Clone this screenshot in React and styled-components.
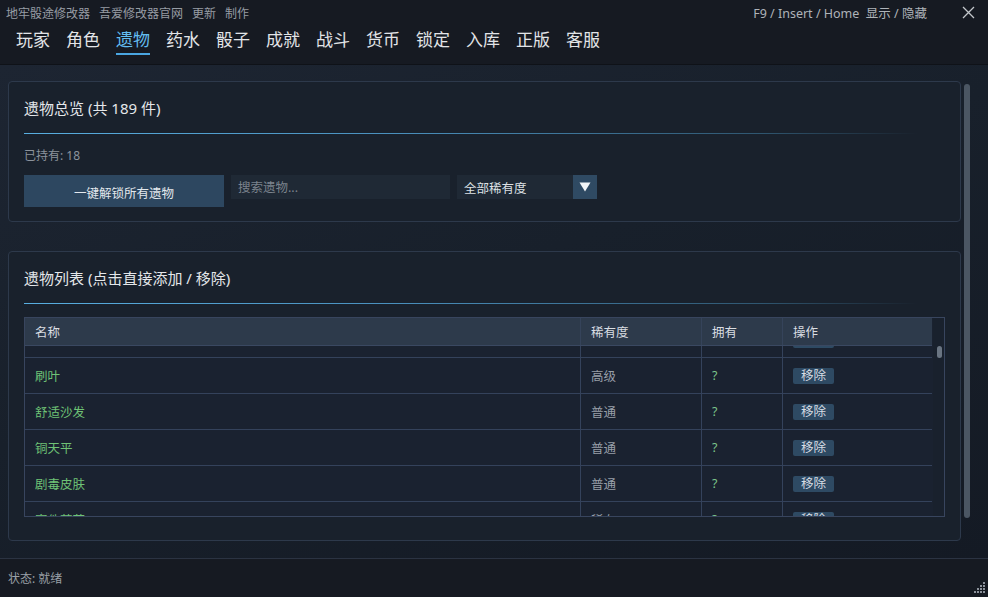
import React, { useLayoutEffect, useRef } from 'react';
import styled, { createGlobalStyle } from 'styled-components';

const GlobalStyle = createGlobalStyle`
  html, body {
    margin: 0;
    padding: 0;
    background: #161a22;
  }
  body {
    font-family: "Noto Sans", "Noto Sans CJK SC", sans-serif;
    color: #dfe3e8;
  }
  * { box-sizing: border-box; }
`;

const tabs = ['玩家', '角色', '遗物', '药水', '骰子', '成就', '战斗', '货币', '锁定', '入库', '正版', '客服'];

const relics = [
  { name: '灵感之石', rarity: '普通' },
  { name: '刷叶', rarity: '高级' },
  { name: '舒适沙发', rarity: '普通' },
  { name: '铜天平', rarity: '普通' },
  { name: '剧毒皮肤', rarity: '普通' },
  { name: '富件蒂花', rarity: '稀有' },
];

const App = () => {
  const bodyRef = useRef(null);

  // list opens slightly scrolled, like the game keeps it
  useLayoutEffect(() => {
    if (bodyRef.current) bodyRef.current.scrollTop = 24;
  }, []);

  return (
    <>
      <GlobalStyle />
      <Window>
        <TopBar>
          <MenuRow>
            <MenuLinks>
              <MenuLink>地牢骰途修改器</MenuLink>
              <MenuLink>吾爱修改器官网</MenuLink>
              <MenuLink>更新</MenuLink>
              <MenuLink>制作</MenuLink>
            </MenuLinks>
            <HotkeyHint>F9 / Insert / Home&nbsp;&nbsp;显示 / 隐藏</HotkeyHint>
            <CloseButton>
              <svg width="13" height="13" viewBox="0 0 13 13">
                <path d="M1 1 L12 12 M12 1 L1 12" stroke="#c3c7cc" strokeWidth="1.3" fill="none" />
              </svg>
            </CloseButton>
          </MenuRow>
          <TabRow>
            {tabs.map((t) => (
              <Tab key={t} $active={t === '遗物'}>{t}</Tab>
            ))}
          </TabRow>
        </TopBar>

        <Content>
          <PanelColumn>
            <Panel $height={141}>
              <PanelTitle>遗物总览 (共 189 件)</PanelTitle>
              <Divider />
              <OwnedText>已持有: 18</OwnedText>
              <ControlRow>
                <PrimaryButton>一键解锁所有遗物</PrimaryButton>
                <SearchInput placeholder="搜索遗物..." />
                <Select>
                  <SelectValue>全部稀有度</SelectValue>
                  <SelectArrow>
                    <svg width="12" height="10" viewBox="0 0 12 10">
                      <path d="M0.5 0.5 H11.5 L6 9.5 Z" fill="#f2f4f6" />
                    </svg>
                  </SelectArrow>
                </Select>
              </ControlRow>
            </Panel>

            <Panel $height={290}>
              <PanelTitle>遗物列表 (点击直接添加 / 移除)</PanelTitle>
              <Divider />
              <Table>
                <TableMain>
                  <HeaderRow>
                    <HeadCell>名称</HeadCell>
                    <HeadCell>稀有度</HeadCell>
                    <HeadCell>拥有</HeadCell>
                    <HeadCell>操作</HeadCell>
                  </HeaderRow>
                  <TableBody ref={bodyRef}>
                    {relics.map((r) => (
                      <Row key={r.name}>
                        <NameCell>{r.name}</NameCell>
                        <Cell>{r.rarity}</Cell>
                        <OwnedCell>?</OwnedCell>
                        <Cell>
                          <RemoveButton>移除</RemoveButton>
                        </Cell>
                      </Row>
                    ))}
                  </TableBody>
                </TableMain>
                <ListScroll>
                  <ListThumb />
                </ListScroll>
              </Table>
            </Panel>
          </PanelColumn>
          <PageScroll />
        </Content>

        <StatusBar>
          <StatusText>状态: 就绪</StatusText>
          <Grip>
            <svg width="12" height="12" viewBox="0 0 12 12">
              {[[10, 0], [7, 3], [10, 3], [4, 6], [7, 6], [10, 6], [1, 9], [4, 9], [7, 9], [10, 9]].map(([x, y]) => (
                <rect key={`${x}-${y}`} x={x} y={y} width="2" height="2" fill="#8b919a" />
              ))}
            </svg>
          </Grip>
        </StatusBar>
      </Window>
    </>
  );
};

const Window = styled.div`
  width: 988px;
  height: 597px;
  display: flex;
  flex-direction: column;
  overflow: hidden;
  background: #161a22;
`;

const TopBar = styled.div`
  height: 65px;
  display: flex;
  flex-direction: column;
  background: #161a22;
  border-bottom: 1px solid #0f1218;
`;

const MenuRow = styled.div`
  height: 25px;
  display: flex;
  align-items: center;
  padding: 0 0 0 6px;
`;

const MenuLinks = styled.div`
  display: flex;
  gap: 9px;
  flex: 1;
`;

const MenuLink = styled.span`
  font-size: 12px;
  color: #979ca4;
`;

const HotkeyHint = styled.span`
  font-size: 12.5px;
  color: #aeb3b9;
  margin-right: 27px;
`;

const CloseButton = styled.div`
  width: 34px;
  display: flex;
  justify-content: center;
  align-items: center;
  padding-right: 6px;
`;

const TabRow = styled.div`
  display: flex;
  gap: 16px;
  padding: 3px 0 0 16px;
`;

const Tab = styled.div`
  font-size: 17px;
  line-height: 24px;
  color: ${(p) => (p.$active ? '#63bdf0' : '#e2e4e7')};
  border-bottom: 2px solid ${(p) => (p.$active ? '#4aa6e2' : 'transparent')};
  padding-bottom: 1px;
`;

const Content = styled.div`
  flex: 1;
  display: flex;
  padding: 16px 0 0 8px;
  background: linear-gradient(160deg, #1d2532 0%, #18202b 45%, #141a24 100%);
`;

const PanelColumn = styled.div`
  width: 953px;
  display: flex;
  flex-direction: column;
  gap: 29px;
`;

const PageScroll = styled.div`
  width: 6px;
  height: 434px;
  margin: 3px 0 0 3px;
  border-radius: 3px;
  background: #4b5663;
`;

const Panel = styled.div`
  height: ${(p) => p.$height}px;
  border: 1px solid #2d394b;
  border-radius: 4px;
  background: #19212c;
  padding: 15px 15px 0;
  display: flex;
  flex-direction: column;
`;

const PanelTitle = styled.div`
  font-size: 15px;
  line-height: 22px;
  color: #e4e7ea;
`;

const Divider = styled.div`
  flex: none;
  height: 1px;
  margin: 14px 0 14px;
  background: linear-gradient(90deg, #58aee0 0%, #4a90bd 40%, #2f5670 80%, rgba(40, 60, 80, 0) 97%);
`;

const OwnedText = styled.div`
  font-size: 12px;
  line-height: 16px;
  color: #8c939c;
  margin-bottom: 11px;
`;

const ControlRow = styled.div`
  display: flex;
  gap: 7px;
  align-items: flex-start;
`;

const PrimaryButton = styled.div`
  width: 200px;
  height: 32px;
  background: #2d4760;
  color: #e3e8ed;
  font-size: 12.5px;
  display: flex;
  align-items: center;
  justify-content: center;
  padding-top: 2px;
`;

const SearchInput = styled.input`
  width: 219px;
  height: 24px;
  border: none;
  outline: none;
  background: #1f2935;
  color: #d7dbe0;
  font-family: inherit;
  font-size: 12.5px;
  padding: 0 7px;
  &::placeholder {
    color: #7b838d;
  }
`;

const Select = styled.div`
  width: 140px;
  height: 24px;
  display: flex;
  background: #1f2935;
`;

const SelectValue = styled.div`
  flex: 1;
  font-size: 12.5px;
  color: #dde1e5;
  display: flex;
  align-items: center;
  padding-left: 7px;
`;

const SelectArrow = styled.div`
  width: 24px;
  background: #2f4a63;
  display: flex;
  align-items: center;
  justify-content: center;
`;

const Table = styled.div`
  height: 200px;
  margin-top: -1px;
  border: 1px solid #38455e;
  display: flex;
  background: #1a2230;
`;

const TableMain = styled.div`
  flex: 1;
  display: flex;
  flex-direction: column;
  min-width: 0;
`;

const columns = '555px 121px 81px 1fr';

const HeaderRow = styled.div`
  height: 28px;
  display: grid;
  grid-template-columns: ${columns};
  background: #2d3a4b;
  border-bottom: 1px solid #3a4861;
`;

const HeadCell = styled.div`
  font-size: 12.5px;
  color: #d9dde2;
  display: flex;
  align-items: center;
  padding-left: 10px;
  & + & {
    border-left: 1px solid #35435a;
  }
`;

const TableBody = styled.div`
  flex: 1;
  overflow: hidden;
`;

const Row = styled.div`
  height: 36px;
  display: grid;
  grid-template-columns: ${columns};
  border-bottom: 1px solid #34425b;
`;

const Cell = styled.div`
  font-size: 12.5px;
  color: #989fa8;
  display: flex;
  align-items: center;
  padding-left: 10px;
  & + & {
    border-left: 1px solid #34425b;
  }
`;

const NameCell = styled(Cell)`
  color: #6fc276;
`;

const OwnedCell = styled(Cell)`
  color: #7cc48a;
`;

const RemoveButton = styled.span`
  background: #2e4a63;
  color: #d6dde4;
  font-size: 12.5px;
  line-height: 16px;
  padding: 0 8px;
  border-radius: 2px;
`;

const ListScroll = styled.div`
  width: 12px;
  padding: 28px 0 0 4px;
  background: #19212d;
  border-left: 1px solid #1a2230;
`;

const ListThumb = styled.div`
  width: 5px;
  height: 12px;
  border-radius: 3px;
  background: #6a7582;
`;

const StatusBar = styled.div`
  height: 39px;
  display: flex;
  align-items: center;
  justify-content: space-between;
  padding: 0 3px 0 8px;
  background: #161a22;
  border-top: 1px solid #2b3342;
`;

const StatusText = styled.span`
  font-size: 12px;
  color: #9aa0a7;
`;

const Grip = styled.div`
  align-self: flex-end;
  display: flex;
  padding-bottom: 3px;
`;

export default App;
